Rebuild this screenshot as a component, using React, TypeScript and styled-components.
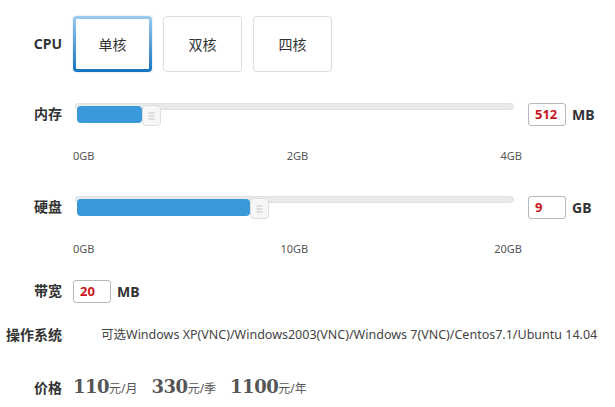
import React from 'react';
import styled, { createGlobalStyle } from 'styled-components';

const GlobalStyle = createGlobalStyle`
  body {
    margin: 0;
    background: #ffffff;
    font-family: "Noto Sans", "Noto Sans CJK SC", sans-serif;
    color: #333;
  }
`;

const Page = styled.div`
  padding-top: 16px;
  width: 615px;
`;

const Row = styled.div<{ $top: number; $align?: string }>`
  display: flex;
  align-items: ${p => p.$align || 'flex-start'};
  margin-top: ${p => p.$top}px;
`;

const Label = styled.div<{ $lh?: number }>`
  width: 62px;
  margin-right: 11px;
  text-align: right;
  font-size: 14px;
  font-weight: bold;
  line-height: ${p => p.$lh || 22}px;
  color: #333;
  flex-shrink: 0;
`;

const ButtonGroup = styled.div`
  display: flex;
  gap: 11px;
`;

const CoreButton = styled.div<{ $active?: boolean }>`
  width: 79px;
  height: 56px;
  box-sizing: border-box;
  display: flex;
  align-items: center;
  justify-content: center;
  font-size: 14px;
  color: #333;
  border-radius: 4px;
  border: ${p => (p.$active ? '3px solid transparent' : '1px solid #dcdcdc')};
  background: ${p =>
    p.$active
      ? 'linear-gradient(#fff, #fff) padding-box, linear-gradient(#9ccbef, #1673bd) border-box'
      : '#fff'};
  box-shadow: ${p => (p.$active ? '0 0 2px rgba(30,120,200,0.35)' : 'none')};
`;

const SliderBlock = styled.div`
  display: flex;
  flex-direction: column;
`;

const SliderLine = styled.div`
  display: flex;
  align-items: flex-start;
`;

const Slider = styled.div`
  position: relative;
  width: 439px;
  height: 24px;
  margin-left: 2px;
`;

const Track = styled.div`
  position: absolute;
  left: 0;
  top: 0;
  right: 0;
  height: 7px;
  border-radius: 4px;
  background: #e8eaec;
  border: 1px solid #dfe2e5;
  box-sizing: border-box;
`;

const Fill = styled.div`
  position: absolute;
  left: 2px;
  top: 3px;
  height: 17px;
  border-radius: 4px;
  background: #3a9ad9;
`;

const Handle = styled.div`
  position: absolute;
  top: 2px;
  width: 19px;
  height: 21px;
  box-sizing: border-box;
  border: 1px solid #dedede;
  border-radius: 4px;
  background: #f6f6f6;
  display: flex;
  align-items: center;
  justify-content: center;
`;

const ValueBox = styled.div<{ $ml?: number }>`
  width: 38px;
  height: 23px;
  box-sizing: border-box;
  border: 1px solid #b8b8b8;
  border-radius: 3px;
  margin-left: ${p => p.$ml ?? 14}px;
  padding-left: 6px;
  font-size: 13px;
  font-weight: bold;
  line-height: 21px;
  color: #c8161d;
  font-family: "Noto Sans", sans-serif;
`;

const Unit = styled.div`
  margin-left: 6px;
  font-size: 14px;
  font-weight: bold;
  line-height: 23px;
  color: #333;
`;

const Ticks = styled.div<{ $top: number }>`
  display: flex;
  justify-content: space-between;
  width: 449px;
  margin-top: ${p => p.$top}px;
  font-size: 11px;
  line-height: 14px;
  color: #555;
`;

const OsText = styled.div`
  margin-left: 28px;
  font-size: 12.5px;
  line-height: 20px;
  color: #444;
  white-space: nowrap;
`;

const Prices = styled.div`
  display: flex;
  align-items: baseline;
  gap: 14px;
`;

const Price = styled.span`
  display: inline-flex;
  align-items: baseline;
`;

const Amount = styled.span`
  font-family: "DejaVu Serif", "Liberation Serif", serif;
  font-weight: bold;
  font-size: 18px;
  color: #555;
  letter-spacing: -0.5px;
`;

const Per = styled.span`
  font-size: 12px;
  color: #555;
`;

const Grip = () => (
  <svg width="7" height="8" viewBox="0 0 7 8">
    <path d="M0.5 1h6M0.5 4h6M0.5 7h6" stroke="#c2c2c2" strokeWidth="1" />
  </svg>
);

interface SliderRowProps {
  title: string;
  fill: number;
  value: string;
  unit: string;
  ticks: string[];
  top: number;
}

const SliderRow: React.FC<SliderRowProps> = ({ title, fill, value, unit, ticks, top }) => (
  <Row $top={top}>
    <Label>{title}</Label>
    <SliderBlock>
      <SliderLine>
        <Slider>
          <Track />
          <Fill style={{ width: fill }} />
          <Handle style={{ left: fill + 2 }}>
            <Grip />
          </Handle>
        </Slider>
        <ValueBox>{value}</ValueBox>
        <Unit>{unit}</Unit>
      </SliderLine>
      <Ticks $top={22}>
        {ticks.map(t => (
          <span key={t}>{t}</span>
        ))}
      </Ticks>
    </SliderBlock>
  </Row>
);

const prices = [
  { amount: '110', per: '元/月' },
  { amount: '330', per: '元/季' },
  { amount: '1100', per: '元/年' },
];

const App: React.FC = () => (
  <Page>
    <GlobalStyle />
    <Row $top={0} $align="center">
      <Label>CPU</Label>
      <ButtonGroup>
        <CoreButton $active>单核</CoreButton>
        <CoreButton>双核</CoreButton>
        <CoreButton>四核</CoreButton>
      </ButtonGroup>
    </Row>
    <SliderRow title="内存" fill={65} value="512" unit="MB" ticks={['0GB', '2GB', '4GB']} top={31} />
    <SliderRow title="硬盘" fill={173} value="9" unit="GB" ticks={['0GB', '10GB', '20GB']} top={33} />
    <Row $top={24}>
      <Label>带宽</Label>
      <ValueBox $ml={0}>20</ValueBox>
      <Unit>MB</Unit>
    </Row>
    <Row $top={22}>
      <Label $lh={20}>操作系统</Label>
      <OsText>可选Windows XP(VNC)/Windows2003(VNC)/Windows 7(VNC)/Centos7.1/Ubuntu 14.04</OsText>
    </Row>
    <Row $top={30} $align="baseline">
      <Label $lh={26}>价格</Label>
      <Prices>
        {prices.map(p => (
          <Price key={p.amount}>
            <Amount>{p.amount}</Amount>
            <Per>{p.per}</Per>
          </Price>
        ))}
      </Prices>
    </Row>
  </Page>
);

export default App;
